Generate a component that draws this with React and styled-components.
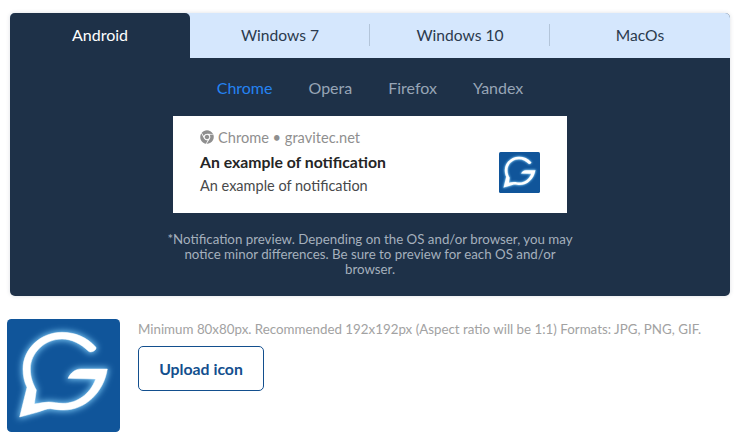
import React from "react";
import styled, { createGlobalStyle } from "styled-components";
import { FaChrome } from "react-icons/fa";

const Global = createGlobalStyle`
  html, body { margin: 0; padding: 0; background: #fff; }
  body { font-family: Lato, "Open Sans", sans-serif; }
`;

const Page = styled.div`
  width: 756px;
  height: 437px;
  overflow: hidden;
  box-sizing: border-box;
  padding: 13px 26px 0 7px;
  display: flex;
  flex-direction: column;
  gap: 23px;
`;

const Panel = styled.section`
  margin-left: 3px;
  height: 283px;
  flex: none;
  background: #1e3148;
  border-radius: 5px;
  overflow: hidden;
  box-shadow: 0 0 4px rgba(30, 49, 72, 0.15);
  display: flex;
  flex-direction: column;
  align-items: center;
`;

const Tabs = styled.div`
  align-self: stretch;
  height: 45px;
  flex: none;
  display: grid;
  grid-template-columns: repeat(4, 180px);
  background: #d5e7fd;
`;

const Tab = styled.div`
  position: relative;
  display: flex;
  align-items: center;
  justify-content: center;
  font-size: ${(p) => (p.$active ? "16px" : "15.6px")};
  padding-bottom: ${(p) => (p.$active ? "2px" : "1px")};
  box-sizing: border-box;
  color: ${(p) => (p.$active ? "#fff" : "#2b3a4d")};
  background: ${(p) => (p.$active ? "#1e3148" : "transparent")};
  border-top-right-radius: ${(p) => (p.$active ? "5px" : "0")};
  ${(p) =>
    p.$divider &&
    `&::after {
      content: "";
      position: absolute;
      right: 0;
      top: 11px;
      height: 22px;
      width: 1px;
      background: #b3c5da;
    }`}
`;

const Browsers = styled.nav`
  display: flex;
  gap: 36px;
  height: 58px;
  flex: none;
  align-items: center;
  font-size: 16px;
`;

const Browser = styled.span`
  color: ${(p) => (p.$active ? "#2583f2" : "#97a5b6")};
`;

const Preview = styled.div`
  box-sizing: border-box;
  width: 394px;
  height: 97px;
  flex: none;
  background: #fff;
  padding: 11px 27px 0;
  display: flex;
  justify-content: space-between;
  align-items: center;
`;

const PreviewText = styled.div`
  align-self: flex-start;
  display: flex;
  flex-direction: column;
`;

const Source = styled.div`
  display: flex;
  align-items: center;
  gap: 4px;
  height: 20px;
  font-size: 14.6px;
  color: #8f8f8f;
`;

const Title = styled.div`
  margin-top: 5px;
  height: 20px;
  line-height: 20px;
  font-size: 15.8px;
  font-weight: 700;
  color: #252525;
`;

const Body = styled.div`
  margin-top: 4px;
  height: 20px;
  line-height: 20px;
  font-size: 14.5px;
  color: #48494b;
`;

const PreviewIcon = styled.div`
  margin-top: 5px;
`;

const Note = styled.p`
  margin: 19px 0 0;
  width: 410px;
  text-align: center;
  font-size: 13.3px;
  line-height: 15px;
  color: #a5b0bd;
`;

const Uploader = styled.section`
  display: flex;
  gap: 18px;
`;

const Side = styled.div`
  display: flex;
  flex-direction: column;
  align-items: flex-start;
  padding-top: 1px;
`;

const Hint = styled.div`
  font-size: 13.33px;
  line-height: 18px;
  color: #a2a2a2;
  white-space: nowrap;
`;

const UploadButton = styled.button`
  margin-top: 8px;
  box-sizing: border-box;
  width: 126px;
  height: 45px;
  background: #fff;
  border: 1px solid #134f8e;
  border-radius: 5px;
  font-family: inherit;
  font-size: 15.8px;
  font-weight: 700;
  color: #134f8e;
`;

const LogoSvg = styled.svg`
  display: block;
  flex: none;
`;

const G_PATH =
  "M266 84C240 55 205 40 165 40C100 40 48 90 48 150C48 170 52 190 60 205L38 294L90 280C105 275 118 269 130 269C145 271 155 273 170 273C235 273 290 220 301 150L222 150C205 150 190 162 183 178L266 180C250 225 210 253 168 253C150 253 140 249 125 249C110 250 95 253 82 255L88 213C78 195 70 175 70 150C70 100 115 60 165 60C195 60 222 75 245 97C253 103 272 92 266 84Z";

function Logo({ size, id }) {
  return (
    <LogoSvg width={size} height={size} viewBox="0 0 339 339">
      <defs>
        <filter id={`${id}-glow`} x="-30%" y="-30%" width="160%" height="160%">
          <feGaussianBlur stdDeviation="9" />
        </filter>
      </defs>
      <rect width="339" height="339" rx="13" fill="#10559a" />
      <path d={G_PATH} fill="#7cc8f5" stroke="#7cc8f5" strokeWidth="8" filter={`url(#${id}-glow)`} />
      <path d={G_PATH} fill="#fff" stroke="#fff" strokeWidth="1.5" />
    </LogoSvg>
  );
}

export default function App() {
  return (
    <Page>
      <Global />
      <Panel>
        <Tabs>
          <Tab $active>Android</Tab>
          <Tab $divider>Windows 7</Tab>
          <Tab $divider>Windows 10</Tab>
          <Tab>MacOs</Tab>
        </Tabs>
        <Browsers>
          <Browser $active>Chrome</Browser>
          <Browser>Opera</Browser>
          <Browser>Firefox</Browser>
          <Browser>Yandex</Browser>
        </Browsers>
        <Preview>
          <PreviewText>
            <Source>
              <FaChrome size={14} color="#8f8f8f" />
              <span>Chrome • gravitec.net</span>
            </Source>
            <Title>An example of notification</Title>
            <Body>An example of notification</Body>
          </PreviewText>
          <PreviewIcon>
            <Logo size={41} id="small" />
          </PreviewIcon>
        </Preview>
        <Note>
          *Notification preview. Depending on the OS and/or browser, you may notice minor
          differences. Be sure to preview for each OS and/or browser.
        </Note>
      </Panel>
      <Uploader>
        <Logo size={113} id="large" />
        <Side>
          <Hint>Minimum 80x80px. Recommended 192x192px (Aspect ratio will be 1:1) Formats: JPG, PNG, GIF.</Hint>
          <UploadButton>Upload icon</UploadButton>
        </Side>
      </Uploader>
    </Page>
  );
}
